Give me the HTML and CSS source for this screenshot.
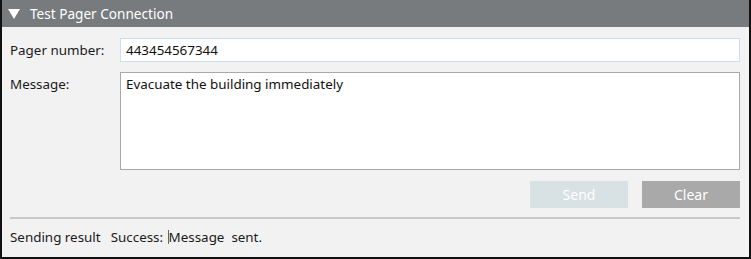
FILE: index.html
```html
<!DOCTYPE html>
<html lang="en">
<head>
  <meta charset="UTF-8" />
  <title>Test Pager Connection</title>
  <link rel="stylesheet" href="styles.css">
</head>
<body>

  <div class="panel">
    <div class="panel-title">
      <svg class="caret" width="12" height="10" viewBox="0 0 12 10"><polygon points="0,0 12,0 6,10" fill="#fff"/></svg>
      <span>Test Pager Connection</span>
    </div>

    <div class="panel-body">
      <div class="form-grid">
        <label class="field-label">Pager number:</label>
        <input class="text-input" type="text" value="443454567344">

        <label class="field-label">Message:</label>
        <textarea class="text-area">Evacuate the building immediately</textarea>
      </div>

      <div class="actions">
        <button class="btn btn-send" disabled>Send</button>
        <button class="btn btn-clear">Clear</button>
      </div>

      <div class="result">
        <span class="result-label">Sending result</span>
        <span class="result-text">Success: <span class="cursor"></span>Message&nbsp; sent.</span>
      </div>
    </div>
  </div>

</body>
</html>
```

FILE: styles.css
```css
* {
  box-sizing: border-box;
}

body {
  margin: 0;
  width: 751px;
  height: 259px;
  font-family: 'Noto Sans', 'Open Sans', sans-serif;
  font-size: 13.4px;
  color: #1a1a1a;
  background: #f2f2f2;
}

.panel {
  width: 751px;
  height: 259px;
  border: 2px solid #111;
  border-top: none;
  background: #f2f2f2;
}

.panel-title {
  height: 27px;
  background: #777b7d;
  color: #fff;
  font-size: 13.6px;
  display: flex;
  align-items: center;
  gap: 10px;
  padding-left: 6px;
}

.caret {
  display: block;
}

.panel-body {
  padding: 11px 9px 0 8px;
}

.form-grid {
  display: grid;
  grid-template-columns: 110px 1fr;
  row-gap: 10px;
}

.field-label {
  padding-top: 2px;
  line-height: 20px;
}

.text-input,
.text-area {
  font-family: inherit;
  font-size: 13.4px;
  color: #111;
  background: #fff;
  outline: none;
  margin: 0;
}

.text-input {
  height: 24px;
  padding: 0 5px;
  border: 1px solid #c9e0f0;
}

.text-area {
  height: 98px;
  padding: 2px 5px;
  border: 1px solid #a9a9a9;
  resize: none;
}

.actions {
  display: flex;
  justify-content: flex-end;
  gap: 14px;
  margin-top: 11px;
}

.btn {
  width: 98px;
  height: 27px;
  border: none;
  color: #fff;
  font-family: inherit;
  font-size: 14px;
  padding: 0;
}

.btn-send {
  background: #d8e1e4;
}

.btn-clear {
  background: #a9a9a9;
}

.result {
  margin-top: 9px;
  border-top: 2px solid #c8c8c8;
  padding-top: 9px;
  display: flex;
  gap: 10px;
}

.cursor {
  display: inline-block;
  width: 1px;
  height: 14px;
  background: #666;
  vertical-align: -2px;
  margin-left: 1px;
}
```
